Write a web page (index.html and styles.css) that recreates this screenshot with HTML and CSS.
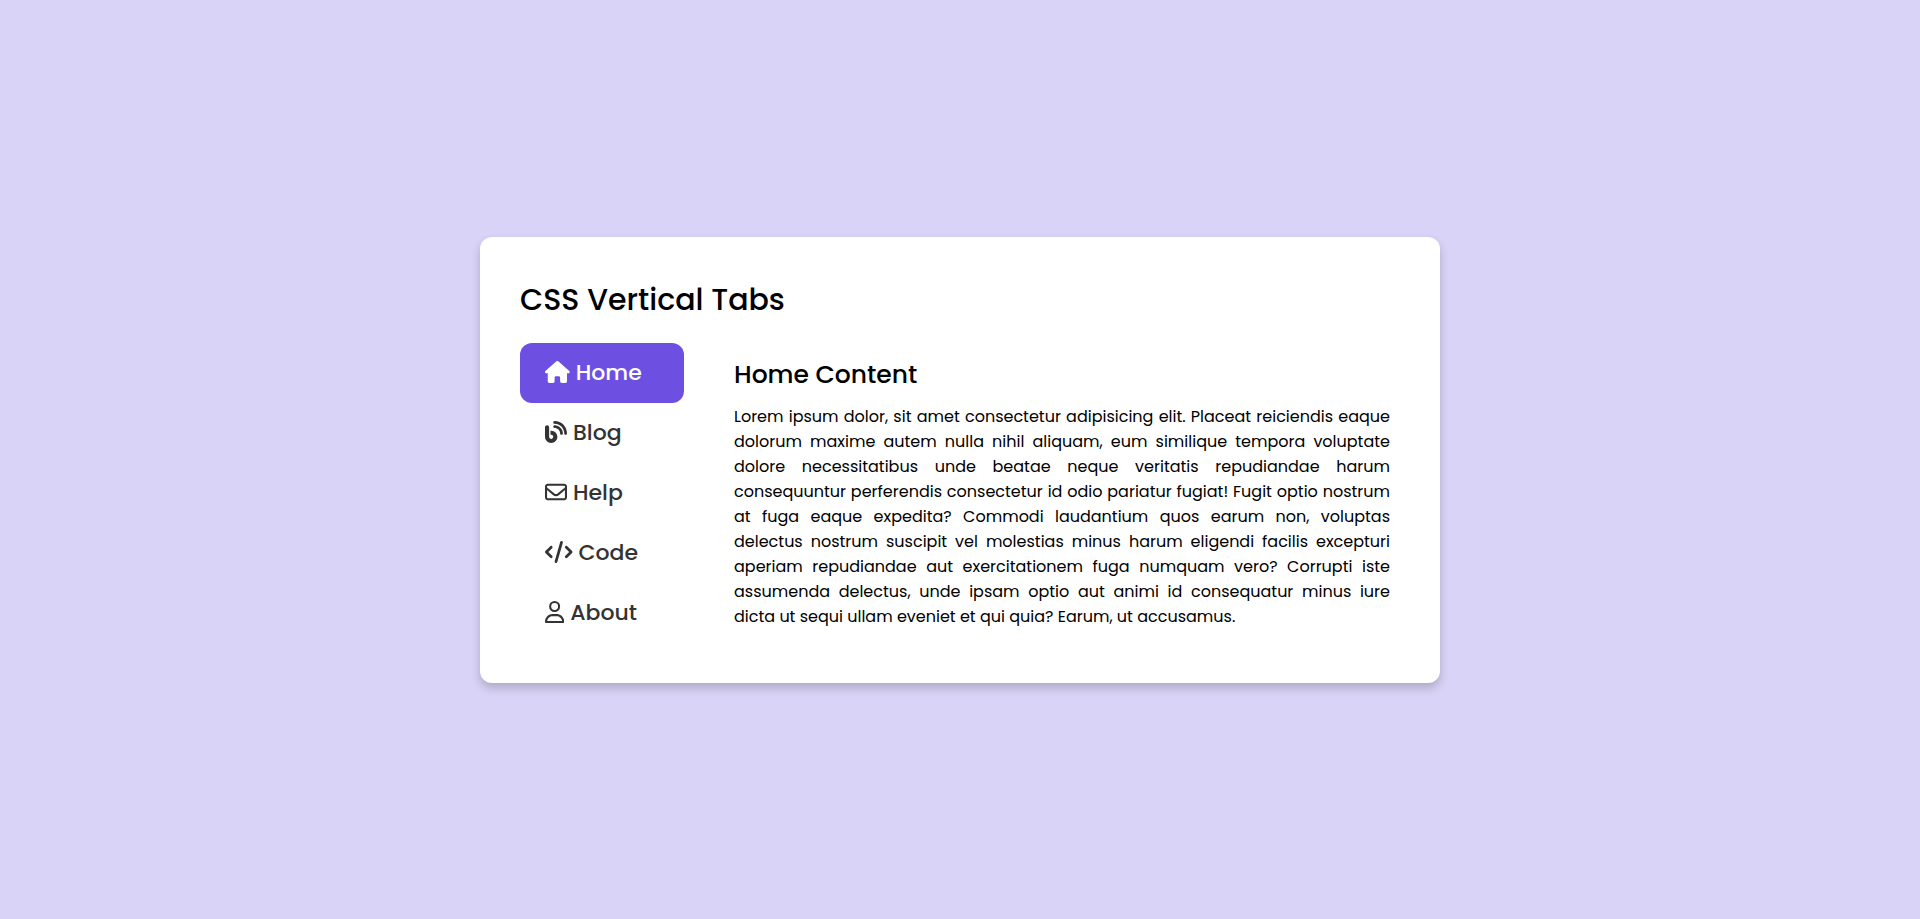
FILE: index.html
```html
<!DOCTYPE html>
<html lang="en">
<head>
<meta charset="utf-8">
<meta name="viewport" content="width=device-width, initial-scale=1">
<title>CSS Vertical Tabs</title>
<link rel="stylesheet" href="styles.css">
</head>
<body>
<main class="card">
  <h1 class="title">CSS Vertical Tabs</h1>
  <div class="layout">
    <div class="tabs" role="tablist" aria-orientation="vertical">
      <button class="tab active" type="button" role="tab" id="tab-home" aria-selected="true" aria-controls="panel-home">
        <svg class="icon" viewBox="0 0 576 512" aria-hidden="true"><path d="M575.8 255.5c0 18-15 32.1-32 32.1h-32l.7 160.2c0 2.7-.2 5.4-.5 8.1V472c0 22.1-17.9 40-40 40H456c-1.1 0-2.2 0-3.3-.1c-1.4 .1-2.8 .1-4.2 .1H416 392c-22.1 0-40-17.9-40-40V448 384c0-17.7-14.3-32-32-32H256c-17.7 0-32 14.3-32 32v64 24c0 22.1-17.9 40-40 40H160 128.1c-1.5 0-3-.1-4.5-.2c-1.2 .1-2.4 .2-3.6 .2H104c-22.1 0-40-17.9-40-40V360c0-.9 0-1.9 .1-2.8V287.6H32c-18 0-32-14-32-32.1c0-9 3-17 10-24L266.4 8c7-7 15-8 22-8s15 2 21 7L564.8 231.5c8 7 12 15 11 24z"/></svg>
        Home
      </button>
      <button class="tab" type="button" role="tab" aria-selected="false">
        <svg class="icon" viewBox="0 0 512 512" aria-hidden="true"><path d="M192 32c0 17.7 14.3 32 32 32c123.7 0 224 100.3 224 224c0 17.7 14.3 32 32 32s32-14.3 32-32C512 128.9 383.1 0 224 0c-17.7 0-32 14.3-32 32zm0 96c0 17.7 14.3 32 32 32c70.7 0 128 57.3 128 128c0 17.7 14.3 32 32 32s32-14.3 32-32c0-106-86-192-192-192c-17.7 0-32 14.3-32 32zM96 144c0-26.5-21.5-48-48-48S0 117.5 0 144V368c0 79.5 64.5 144 144 144s144-64.5 144-144s-64.5-144-144-144H128v96h16c26.5 0 48 21.5 48 48s-21.5 48-48 48s-48-21.5-48-48V144z"/></svg>
        Blog
      </button>
      <button class="tab" type="button" role="tab" aria-selected="false">
        <svg class="icon" viewBox="0 0 512 512" aria-hidden="true"><path d="M64 112c-8.8 0-16 7.2-16 16v22.1L220.5 291.7c20.7 17 50.4 17 71.1 0L464 150.1V128c0-8.8-7.2-16-16-16H64zM48 212.2V384c0 8.8 7.2 16 16 16H448c8.8 0 16-7.2 16-16V212.2L322 328.8c-38.4 31.5-93.7 31.5-132 0L48 212.2zM0 128C0 92.7 28.7 64 64 64H448c35.3 0 64 28.7 64 64V384c0 35.3-28.7 64-64 64H64c-35.3 0-64-28.7-64-64V128z"/></svg>
        Help
      </button>
      <button class="tab" type="button" role="tab" aria-selected="false">
        <svg class="icon" viewBox="0 0 640 512" aria-hidden="true"><path d="M392.8 1.2c-17-4.9-34.7 5-39.6 22l-128 448c-4.9 17 5 34.7 22 39.6s34.7-5 39.6-22l128-448c4.9-17-5-34.7-22-39.6zm80.6 120.1c-12.5 12.5-12.5 32.8 0 45.3L562.7 256l-89.4 89.4c-12.5 12.5-12.5 32.8 0 45.3s32.8 12.5 45.3 0l112-112c12.5-12.5 12.5-32.8 0-45.3l-112-112c-12.5-12.5-32.8-12.5-45.3 0zm-306.7 0c-12.5-12.5-32.8-12.5-45.3 0l-112 112c-12.5 12.5-12.5 32.8 0 45.3l112 112c12.5 12.5 32.8 12.5 45.3 0s12.5-32.8 0-45.3L77.3 256l89.4-89.4c12.5-12.5 12.5-32.8 0-45.3z"/></svg>
        Code
      </button>
      <button class="tab" type="button" role="tab" aria-selected="false">
        <svg class="icon" viewBox="0 0 448 512" aria-hidden="true"><path d="M304 128a80 80 0 1 0 -160 0 80 80 0 1 0 160 0zM96 128a128 128 0 1 1 256 0A128 128 0 1 1 96 128zM49.3 464H398.7c-8.9-63.3-63.3-112-129-112H178.3c-65.7 0-120.1 48.7-129 112zM0 482.3C0 383.8 79.8 304 178.3 304h91.4C368.2 304 448 383.8 448 482.3c0 16.4-13.3 29.7-29.7 29.7H29.7C13.3 512 0 498.7 0 482.3z"/></svg>
        About
      </button>
    </div>
    <section class="panel" role="tabpanel" id="panel-home" aria-labelledby="tab-home">
      <h2 class="panel-title">Home Content</h2>
      <p class="panel-text">Lorem ipsum dolor, sit amet consectetur adipisicing elit. Placeat reiciendis eaque dolorum maxime autem nulla nihil aliquam, eum similique tempora voluptate dolore necessitatibus unde beatae neque veritatis repudiandae harum consequuntur perferendis consectetur id odio pariatur fugiat! Fugit optio nostrum at fuga eaque expedita? Commodi laudantium quos earum non, voluptas delectus nostrum suscipit vel molestias minus harum eligendi facilis excepturi aperiam repudiandae aut exercitationem fuga numquam vero? Corrupti iste assumenda delectus, unde ipsam optio aut animi id consequatur minus iure dicta ut sequi ullam eveniet et qui quia? Earum, ut accusamus.</p>
    </section>
  </div>
</main>
</body>
</html>
```

FILE: styles.css
```css
* {
  box-sizing: border-box;
  margin: 0;
  padding: 0;
}

body {
  display: flex;
  align-items: center;
  justify-content: center;
  min-height: 100vh;
  background: #d9d3f7;
  color: #000;
  font-family: Poppins, Inter, "Open Sans", sans-serif;
}

.card {
  width: 100%;
  max-width: 960px;
  padding: 40px;
  border-radius: 12px;
  background: #fff;
  box-shadow: 0 5px 10px rgba(0, 0, 0, 0.2);
}

.title {
  margin-bottom: 20px;
  font-size: 30px;
  font-weight: 500;
  line-height: 46px;
}

.layout {
  display: flex;
  gap: 40px;
}

.tabs {
  display: flex;
  flex: 0 0 164px;
  flex-direction: column;
}

.tab {
  display: flex;
  align-items: center;
  gap: 6px;
  height: 60px;
  padding: 0 25px;
  border: 0;
  border-radius: 12px;
  background: transparent;
  color: #333;
  font-family: inherit;
  font-size: 22px;
  font-weight: 500;
  cursor: pointer;
}

.tab.active {
  background: #6d50e2;
  color: #fff;
}

.icon {
  height: 22px;
  margin-bottom: 2px;
  fill: currentColor;
}

.panel {
  flex: 1;
  min-width: 0;
  padding: 13px 10px;
}

.panel-title {
  margin-bottom: 10px;
  font-size: 25px;
  font-weight: 500;
  line-height: 38px;
}

.panel-text {
  font-size: 16px;
  line-height: 25px;
  text-align: justify;
}
```
